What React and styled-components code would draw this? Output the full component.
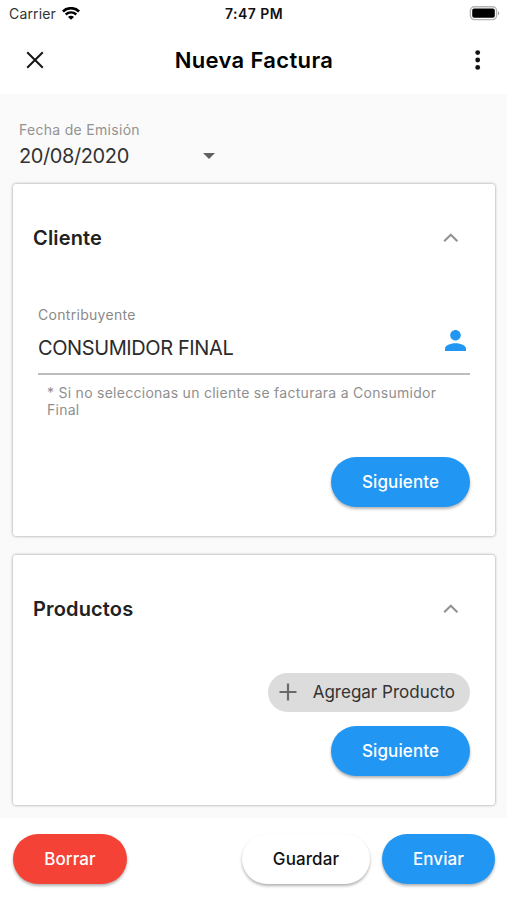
import React from "react";
import styled, { createGlobalStyle } from "styled-components";

const App = () => {
  return (
    <>
      <GlobalStyle />
      <Screen>
        <StatusBar>
          <Carrier>
            <span>Carrier</span>
            <WifiIcon />
          </Carrier>
          <Clock>7:47 PM</Clock>
          <BatteryIcon />
        </StatusBar>
        <AppBar>
          <IconButton aria-label="Cerrar">
            <svg width="18" height="18" viewBox="0 0 18 18">
              <path d="M1.2 1.2L16.8 16.8M16.8 1.2L1.2 16.8" stroke="#161616" strokeWidth="2" />
            </svg>
          </IconButton>
          <Title>Nueva Factura</Title>
          <IconButton aria-label="Opciones" $end>
            <svg width="6" height="20" viewBox="0 0 6 20" fill="#111">
              <circle cx="2.7" cy="2.6" r="2.4" />
              <circle cx="2.7" cy="10" r="2.4" />
              <circle cx="2.7" cy="17.4" r="2.4" />
            </svg>
          </IconButton>
        </AppBar>
        <Content>
          <DateField>
            <DateLabel>Fecha de Emisión</DateLabel>
            <DateValue>
              <span>20/08/2020</span>
              <svg width="12" height="6" viewBox="0 0 12 6">
                <path d="M0 0H12L6 6Z" fill="#616161" />
              </svg>
            </DateValue>
          </DateField>
          <Card $height={352}>
            <CardHeader>
              <CardTitle>Cliente</CardTitle>
              <ChevronUp />
            </CardHeader>
            <Field>
              <FieldLabel>Contribuyente</FieldLabel>
              <FieldRow>
                <FieldValue>CONSUMIDOR FINAL</FieldValue>
                <PersonIcon />
              </FieldRow>
            </Field>
            <Helper>
              * Si no seleccionas un cliente se facturara a Consumidor Final
            </Helper>
            <Actions $top={39}>
              <Button $width={139}>Siguiente</Button>
            </Actions>
          </Card>
          <Card $height={250}>
            <CardHeader>
              <CardTitle>Productos</CardTitle>
              <ChevronUp />
            </CardHeader>
            <Actions $top={9}>
              <Chip>
                <svg width="18" height="18" viewBox="0 0 18 18">
                  <path d="M9 0.5V17.5M0.5 9H17.5" stroke="#6a6a6a" strokeWidth="2.2" />
                </svg>
                <span>Agregar Producto</span>
              </Chip>
              <Button $width={139}>Siguiente</Button>
            </Actions>
          </Card>
        </Content>
        <Footer>
          <Button $width={114} $color="#f44336">
            Borrar
          </Button>
          <FooterRight>
            <Button $width={128} $color="#fff" $text="#111">
              Guardar
            </Button>
            <Button $width={113}>Enviar</Button>
          </FooterRight>
        </Footer>
      </Screen>
    </>
  );
};

const WifiIcon = () => (
  <svg width="18" height="14" viewBox="0 0 18 14" fill="none" stroke="#000">
    <path d="M0.9 4.4C5.4 0.2 12.6 0.2 17.1 4.4" strokeWidth="2.7" />
    <path d="M3.7 7.5C6.7 4.7 11.3 4.7 14.3 7.5" strokeWidth="2.4" />
    <path d="M9 12.8L6 9.9C7.6 8.4 10.4 8.4 12 9.9Z" fill="#000" stroke="none" />
  </svg>
);

const BatteryIcon = () => (
  <svg width="31" height="15" viewBox="0 0 31 15">
    <rect x="1.4" y="0.8" width="26.2" height="12.8" rx="4" fill="#fff" stroke="#b4b4b4" strokeWidth="1.4" />
    <rect x="3.2" y="2.6" width="22.6" height="9.2" rx="2" fill="#000" />
    <path d="M29 5.2C30.8 5.8 30.8 8.6 29 9.2Z" fill="#a8a8a8" />
  </svg>
);

const ChevronUp = () => (
  <svg width="16" height="10" viewBox="0 0 16 10" fill="none">
    <path d="M1.2 8.2L7.8 1.7L14.4 8.2" stroke="#929292" strokeWidth="2.1" />
  </svg>
);

const PersonIcon = () => (
  <svg width="21" height="21" viewBox="4 4 16 16" fill="#2196f3">
    <path d="M12 12c2.21 0 4-1.79 4-4s-1.79-4-4-4-4 1.79-4 4 1.79 4 4 4zm0 2c-2.67 0-8 1.34-8 4v2h16v-2c0-2.66-5.33-4-8-4z" />
  </svg>
);

const GlobalStyle = createGlobalStyle`
  * {
    box-sizing: border-box;
  }
  body {
    margin: 0;
    background: #fff;
    font-family: Inter, "Liberation Sans", sans-serif;
  }
  svg {
    display: block;
    flex-shrink: 0;
  }
`;

const Screen = styled.div`
  width: 507px;
  height: 900px;
  display: flex;
  flex-direction: column;
  overflow: hidden;
  background: #fff;
`;

const StatusBar = styled.div`
  height: 27px;
  display: grid;
  grid-template-columns: 1fr auto 1fr;
  align-items: center;
  padding: 0 7px 0 9px;
  font-size: 14px;
  color: #111;

  > svg {
    justify-self: end;
  }
`;

const Carrier = styled.div`
  display: flex;
  align-items: center;
  gap: 6px;
  color: #333;
  letter-spacing: 0.15px;
`;

const Clock = styled.div`
  font-weight: 600;
  letter-spacing: 0.45px;
  margin-right: 1px;
`;

const AppBar = styled.header`
  height: 67px;
  display: grid;
  grid-template-columns: 1fr auto 1fr;
  align-items: center;
  padding: 0 26px 2px;
`;

const IconButton = styled.button`
  display: flex;
  padding: 0;
  border: 0;
  background: none;
  justify-self: ${(props) => (props.$end ? "end" : "start")};
`;

const Title = styled.h1`
  margin: 0 0 0 1px;
  font-size: 22px;
  font-weight: 600;
  letter-spacing: 0.35px;
  color: #000;
`;

const Content = styled.main`
  height: 724px;
  padding: 27px 12px 0 13px;
  background: #fafafa;
`;

const DateField = styled.div`
  width: 202px;
  height: 63px;
  margin-left: 6px;
`;

const DateLabel = styled.div`
  font-size: 14px;
  line-height: 17px;
  letter-spacing: 0.3px;
  color: #929292;
`;

const DateValue = styled.div`
  display: flex;
  align-items: center;
  justify-content: space-between;
  height: 35px;
  padding-right: 6px;
  font-size: 20px;
  letter-spacing: -0.4px;
  color: #333;
`;

const Card = styled.section`
  height: ${(props) => props.$height}px;
  margin-bottom: 19px;
  padding: 0 25px 0 20px;
  background: #fff;
  border-radius: 3px;
  box-shadow: 0 0 3px rgba(0, 0, 0, 0.42);
`;

const CardHeader = styled.div`
  height: 109px;
  display: flex;
  align-items: center;
  justify-content: space-between;
  padding: 0 11px 2px 0;
`;

const CardTitle = styled.h2`
  margin: 0;
  font-size: 20px;
  font-weight: 600;
  letter-spacing: 0.15px;
  color: #212121;
`;

const Field = styled.div`
  height: 82px;
  margin-left: 5px;
  padding-top: 13px;
  border-bottom: 2px solid #bdbdbd;
`;

const FieldLabel = styled.div`
  font-size: 14px;
  line-height: 18px;
  letter-spacing: 0.3px;
  color: #8a8a8a;
`;

const FieldRow = styled.div`
  display: flex;
  justify-content: space-between;
  padding: 6px 4px 0 0;
`;

const FieldValue = styled.div`
  font-size: 20px;
  line-height: 36px;
  letter-spacing: -0.4px;
  color: #2b2b2b;
`;

const Helper = styled.p`
  margin: 9px 10px 0 14px;
  font-size: 14px;
  line-height: 17px;
  letter-spacing: 0.27px;
  color: #8f8f8f;
`;

const Actions = styled.div`
  display: flex;
  flex-direction: column;
  align-items: flex-end;
  gap: 14px;
  padding-top: ${(props) => props.$top}px;
`;

const Button = styled.button`
  width: ${(props) => props.$width}px;
  height: 50px;
  padding: 0;
  border: 0;
  border-radius: 25px;
  background: ${(props) => props.$color || "#2196f3"};
  color: ${(props) => props.$text || "#fff"};
  font-family: inherit;
  font-size: 17px;
  font-weight: 550;
  letter-spacing: 0.1px;
  box-shadow: 0 2px 3px rgba(0, 0, 0, 0.3);
`;

const Chip = styled.button`
  height: 39px;
  display: flex;
  align-items: center;
  gap: 16px;
  padding: 0 15px 1px 11px;
  border: 0;
  border-radius: 20px;
  background: #dcdcdc;
  color: #333;
  font-family: inherit;
  font-size: 17px;
`;

const Footer = styled.footer`
  flex: 1;
  display: flex;
  justify-content: space-between;
  padding: 16px 12px 0 13px;
`;

const FooterRight = styled.div`
  display: flex;
  gap: 12px;
`;

export default App;
